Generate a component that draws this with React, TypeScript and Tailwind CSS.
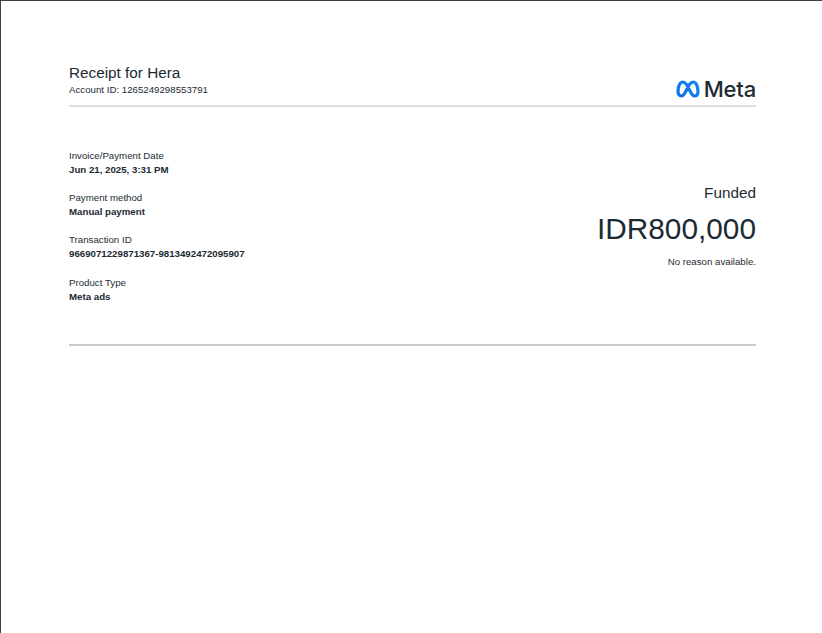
export default function App() {
  const rows = [
    ["Invoice/Payment Date", "Jun 21, 2025, 3:31 PM"],
    ["Payment method", "Manual payment"],
    ["Transaction ID", "9669071229871367-9813492472095907"],
    ["Product Type", "Meta ads"],
  ];
  return (
    <div className="h-[633px] w-[822px] overflow-hidden border-l border-t border-[#3c3f43] bg-white pl-[68px] pr-[66px] pt-[63px] font-['Liberation_Sans',sans-serif] text-[#1c2b33]">
      <header className="flex items-end justify-between border-b-2 border-[#dcdde0] pb-[9px]">
        <div>
          <div className="text-[15.3px] leading-[18px]">Receipt for Hera</div>
          <div className="mt-[2px] text-[9.7px] leading-[12px]">Account ID: 1265249298553791</div>
        </div>
        <div className="-mb-[4px] flex items-center gap-[4px]">
          <svg width="24" height="18" viewBox="0 0 24 18" fill="none">
            <defs>
              <linearGradient id="metaBlue" x1="0" y1="1" x2="1" y2="0">
                <stop offset="0" stopColor="#0a6fe8" />
                <stop offset="1" stopColor="#1384f5" />
              </linearGradient>
            </defs>
            <path
              d="M2 11.5C2 6 4 2 6.8 2C9.5 2 11 5 13 9C15 13 16.2 16 18.6 16C20.8 16 22 14 22 11.5C22 6 20 2 17.2 2C14.5 2 13 5 11 9C9 13 7.8 16 5.4 16C3.2 16 2 14 2 11.5Z"
              stroke="url(#metaBlue)"
              strokeWidth="3.2"
            />
          </svg>
          <span className="font-['Inter',sans-serif] text-[22px] font-medium leading-[22px] tracking-[-0.2px]">Meta</span>
        </div>
      </header>
      <main className="flex items-center justify-between border-b-2 border-[#c8c9cd] pb-[40.5px] pt-[41.5px]">
        <div className="flex flex-col gap-[14.4px]">
          {rows.map(([label, value]) => (
            <div key={label} className="text-[9.7px] leading-[14px]">
              <div>{label}</div>
              <div className="font-bold">{value}</div>
            </div>
          ))}
        </div>
        <div className="text-right">
          <div className="text-[15.3px] leading-[18px]">Funded</div>
          <div className="mt-[7px] text-[29.8px] leading-[40px]">IDR800,000</div>
          <div className="mt-[7px] text-[9.7px] leading-[12px]">No reason available.</div>
        </div>
      </main>
    </div>
  );
}
